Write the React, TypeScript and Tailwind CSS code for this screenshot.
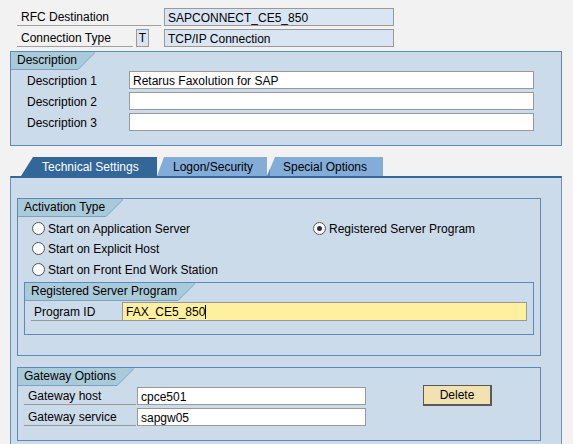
import React from "react";

function Header({ title }: { title: string }) {
  return (
    <div className="flex h-[18px]">
      <div className="h-[18px] bg-[#a9cad9] border-b border-[#7ba3c1] pl-[6px] pr-[1px] leading-[17px] whitespace-nowrap">
        {title}
      </div>
      <svg width="17" height="18" className="block shrink-0">
        <polygon points="0,0 17,0 0,17.5" fill="#a9cad9" />
        <line x1="0" y1="17.5" x2="17.5" y2="0" stroke="#7ba3c1" strokeWidth="1" />
      </svg>
    </div>
  );
}

function Group({
  title,
  className,
  children,
}: {
  title: string;
  className: string;
  children?: React.ReactNode;
}) {
  return (
    <div className={`box-border border border-[#5f89b6] bg-[#ccdbea] ${className}`}>
      <Header title={title} />
      {children}
    </div>
  );
}

function Radio({ checked, label }: { checked?: boolean; label: string }) {
  return (
    <div className="flex items-center">
      <span className="box-border w-[13px] h-[13px] rounded-full border border-[#555] bg-white flex items-center justify-center">
        {checked && <span className="w-[5px] h-[5px] rounded-full bg-[#2e2e3c]" />}
      </span>
      <span className="ml-[3px] pt-[1px] whitespace-nowrap">{label}</span>
    </div>
  );
}

function Field({
  value,
  className,
}: {
  value?: string;
  className: string;
}) {
  return (
    <div
      className={`box-border h-[18px] border border-[#999] pl-[3px] pt-[1px] leading-[16px] whitespace-nowrap ${className}`}
    >
      {value}
    </div>
  );
}

export default function App() {
  return (
    <div className="w-[573px] h-[444px] overflow-hidden bg-[#f2f2f2] text-[12px] text-black font-['Liberation_Sans',Arial,sans-serif] pt-[8px] flex flex-col">
      {/* Top fields */}
      <div className="pl-[17px] flex flex-col gap-[3px]">
        <div className="flex h-[18px]">
          <div className="box-border w-[144px] h-[18px] border-b border-[#a0a0a0] pl-[4px] pt-[1px] leading-[17px]">
            RFC Destination
          </div>
          <Field value="SAPCONNECT_CE5_850" className="ml-[3px] w-[230px] bg-[#dae5f3]" />
        </div>
        <div className="flex h-[18px]">
          <div className="box-border w-[116px] h-[18px] border-b border-[#a0a0a0] pl-[4px] pt-[1px] leading-[17px]">
            Connection Type
          </div>
          <div className="box-border ml-[3px] w-[13px] h-[18px] border border-[#999] bg-[#dae5f3] text-center pt-[1px] leading-[15px]">
            T
          </div>
          <Field value="TCP/IP Connection" className="ml-[15px] w-[230px] bg-[#dae5f3]" />
        </div>
      </div>

      {/* Description */}
      <Group title="Description" className="mt-[4px] ml-[10px] w-[552px] h-[95px]">
        <div className="mt-[1px] flex flex-col gap-[3px]">
          {[
            ["Description 1", "Retarus Faxolution for SAP"],
            ["Description 2", ""],
            ["Description 3", ""],
          ].map(([l, v]) => (
            <div key={l} className="flex h-[18px]">
              <div className="w-[118px] pl-[16px] pt-[1px] leading-[18px]">{l}</div>
              <Field value={v} className="w-[405px] bg-white" />
            </div>
          ))}
        </div>
      </Group>

      {/* Tabs */}
      <div className="mt-[11px] flex h-[19px] items-end">
        <div className="ml-[21px] w-[136px] h-[19px] bg-[#336699] text-white pl-[21px] pt-[1px] leading-[19px] whitespace-nowrap [clip-path:polygon(12px_0,100%_0,100%_100%,0_100%)]">
          Technical Settings
        </div>
        <div className="relative w-[110px] h-[19px] bg-[#84acd9] pl-[16px] pt-[1px] leading-[19px] whitespace-nowrap [clip-path:polygon(7px_0,100%_0,100%_100%,0_100%)]">
          Logon/Security
        </div>
        <div className="relative w-[116px] h-[19px] bg-[#84acd9] pl-[16px] pt-[1px] leading-[19px] whitespace-nowrap [clip-path:polygon(8px_0,100%_0,100%_100%,0_100%)]">
          <span className="absolute left-0 top-0 w-[3px] h-full bg-[#5f86b3]" />
          Special Options
        </div>
      </div>

      {/* Panel */}
      <div className="ml-[10px] w-[552px] flex-1 box-border border-t-2 border-t-[#336699] border-l border-l-[#6a92bb] border-r border-r-[#6a92bb] bg-[#ccdbea] pt-[20px] pl-[6px]">
        <Group title="Activation Type" className="w-[524px] h-[158px]">
          <div className="mt-[1px] flex">
            <div className="w-[295px] pl-[14px] flex flex-col">
              <div className="h-[20px] flex items-center">
                <Radio label="Start on Application Server" />
              </div>
              <div className="h-[21px] flex items-center">
                <Radio label="Start on Explicit Host" />
              </div>
              <div className="h-[20px] flex items-center">
                <Radio label="Start on Front End Work Station" />
              </div>
            </div>
            <div className="h-[20px] flex items-center">
              <Radio checked label="Registered Server Program" />
            </div>
          </div>
          <Group title="Registered Server Program" className="mt-[3px] ml-[6px] w-[510px] h-[53px]">
            <div className="mt-[1px] flex h-[19px] ml-[6px]">
              <div className="box-border w-[91px] h-[19px] border-b border-[#999] pl-[3px] pt-[1px] leading-[18px]">
                Program ID
              </div>
              <div className="box-border w-[405px] h-[19px] border border-[#999] bg-[#fff0a0] pl-[3px] pt-[1px] leading-[16px] flex">
                <span>FAX_CE5_850</span>
                <span className="w-[1px] h-[14px] mt-[1px] bg-black" />
              </div>
            </div>
          </Group>
        </Group>

        <Group title="Gateway Options" className="mt-[11px] w-[524px] h-[74px]">
          <div className="flex items-start">
            <div className="mt-[1px] ml-[6px] flex flex-col gap-[3px]">
              {[
                ["Gateway host", "cpce501"],
                ["Gateway service", "sapgw05"],
              ].map(([l, v]) => (
                <div key={l} className="flex h-[18px]">
                  <div className="box-border w-[112px] h-[18px] border-b border-[#999] pl-[4px] pt-[1px] leading-[17px]">
                    {l}
                  </div>
                  <Field value={v} className="ml-[1px] w-[229px] bg-white" />
                </div>
              ))}
            </div>
            <div className="box-border mt-[-1px] ml-[57px] w-[69px] h-[21px] border border-[#5a5a5a] border-r-2 border-b-2 bg-[#f3e2b1] text-center pt-[1px] leading-[17px]">
              Delete
            </div>
          </div>
        </Group>
      </div>
    </div>
  );
}
